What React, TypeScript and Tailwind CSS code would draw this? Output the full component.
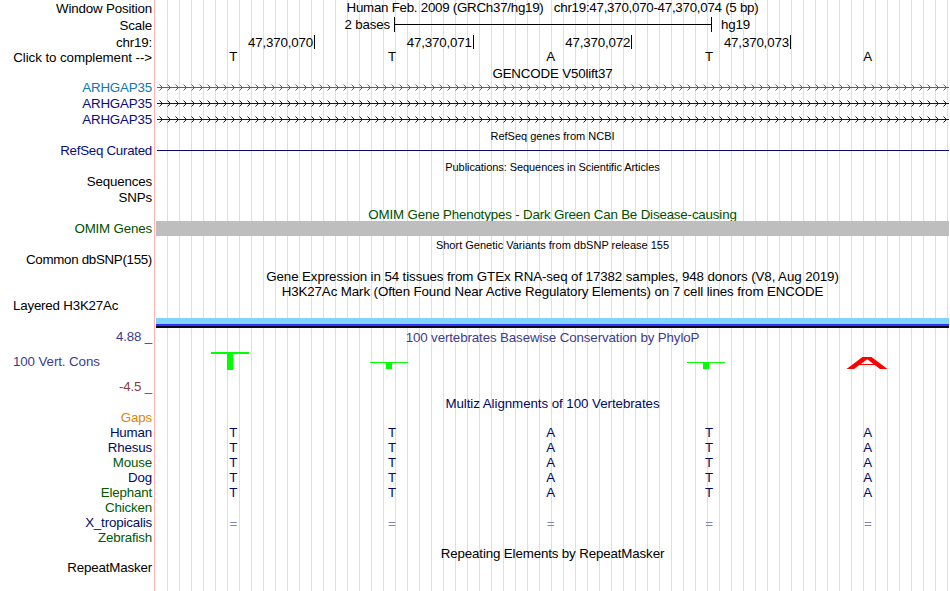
import { clsx } from 'clsx';
import type { ReactNode } from 'react';

const BASES = ['T', 'T', 'A', 'T', 'A'];
const POSITIONS = ['47,370,070', '47,370,071', '47,370,072', '47,370,073'];

const SPECIES = [
  { name: 'Gaps', color: 'text-[#e08600]' },
  { name: 'Human', color: 'text-[#000a64]', bases: BASES },
  { name: 'Rhesus', color: 'text-[#000a64]', bases: BASES },
  { name: 'Mouse', color: 'text-[#005a00]', bases: BASES },
  { name: 'Dog', color: 'text-[#000a64]', bases: BASES },
  { name: 'Elephant', color: 'text-[#005a00]', bases: BASES },
  { name: 'Chicken', color: 'text-[#005a00]' },
  { name: 'X_tropicalis', color: 'text-[#000a64]', bases: ['=', '=', '=', '=', '='], faded: true },
  { name: 'Zebrafish', color: 'text-[#005a00]' },
];

interface RowProps {
  label?: string;
  labelClass?: string;
  className?: string;
  children?: ReactNode;
}

function Row({ label, labelClass, className, children }: RowProps) {
  return (
    <div className={clsx('flex shrink-0', className ?? 'h-4')}>
      <div className={clsx('flex w-[154px] shrink-0 items-center pr-0.5', labelClass ?? 'justify-end')}>{label}</div>
      <div className="ml-0.5 flex min-w-0 flex-1 items-center">{children}</div>
    </div>
  );
}

function Title({ children, className, small }: { children: ReactNode; className?: string; small?: boolean }) {
  return <div className={clsx('w-full pt-0.5 text-center', small && 'text-[11px]', className)}>{children}</div>;
}

function BaseRow({ bases, className }: { bases: string[]; className?: string }) {
  return (
    <div className={clsx('-ml-0.5 grid w-[793px] shrink-0 grid-cols-5 text-center', className)}>
      {bases.map((base, i) => (
        <span key={i}>{base}</span>
      ))}
    </div>
  );
}

// Intron line with strand arrows
function GeneLine({ id, color }: { id: string; color: string }) {
  return (
    <svg width="793" height="16" className="block" shapeRendering="crispEdges">
      <defs>
        <pattern id={id} width="8" height="16" patternUnits="userSpaceOnUse">
          <rect x="6" y="7" width="1" height="1" fill={color} />
          <path d="M5 6h1v1h-1zM5 8h1v1h-1zM4 5h1v1h-1zM4 9h1v1h-1z" fill={color} />
          <path d="M3 4h1v1h-1zM3 10h1v1h-1z" fill={color} opacity="0.5" />
        </pattern>
      </defs>
      <rect x="1" y="7" width="792" height="1" fill={color} />
      <rect x="1" width="792" height="16" fill={`url(#${id})`} />
    </svg>
  );
}

function ConservationLogo() {
  return (
    <svg width="793" height="35" className="block">
      <g fill="#00ff00" shapeRendering="crispEdges">
        <rect x="55" y="7" width="38" height="2" />
        <rect x="71" y="7" width="6" height="18" />
        <rect x="214" y="17" width="38" height="1" />
        <rect x="230" y="17" width="6" height="7" />
        <rect x="531" y="17" width="38" height="1" />
        <rect x="547" y="17" width="6" height="7" />
      </g>
      <path d="M690.5 24L706.5 12H715.5L731.5 24H724L711.2 14.3L698 24ZM701 19H721V20H701Z" fill="#ff0000" />
    </svg>
  );
}

export default function App() {
  return (
    <div className="relative h-[591px] w-[950px] overflow-hidden bg-white font-['Liberation_Sans',Arial,sans-serif] text-[13.33px] leading-none tracking-[-0.17px] whitespace-pre text-black">
      <div className="flex h-full w-[949px] flex-col bg-[linear-gradient(to_right,#ffb4b4,#ffb4b4)] bg-[length:1px_100%] bg-[position:154px_0] bg-no-repeat">
        <div className="absolute top-0 left-[156px] h-full w-[793px] bg-[repeating-linear-gradient(to_right,transparent_0,transparent_11px,#dcdcfa_11px,#dcdcfa_12px)]" />
        <div className="relative flex flex-col">
          <Row label="Window Position" labelClass="justify-end pt-0.5">
            <Title className="pt-0 pb-0.5 tracking-[-0.26px]">
              {'Human Feb. 2009 (GRCh37/hg19)   chr19:47,370,070-47,370,074 (5 bp)'}
            </Title>
          </Row>
          <Row label="Scale" className="h-[17px]" labelClass="justify-end pt-0.5">
            <span className="w-[238px] pr-1 text-right">2 bases</span>
            <div className="flex h-[15px] w-[318px] items-center border-x border-black">
              <div className="h-px w-full bg-black" />
            </div>
            <span className="ml-[9px]">hg19</span>
          </Row>
          <Row label="chr19:" className="h-[17px]" labelClass="justify-end pt-0.5">
            <div className="grid w-full grid-cols-5">
              {POSITIONS.map((pos) => (
                <div
                  key={pos}
                  className="-mr-[0.5px] flex h-[14px] items-center justify-end border-r border-black pt-0.5 pr-px"
                >
                  {pos}
                </div>
              ))}
            </div>
          </Row>
          <Row label="Click to complement -->" className="h-[15px]" labelClass="justify-end tracking-[-0.07px]">
            <BaseRow bases={BASES} className="pb-0.5" />
          </Row>

          <Row className="h-[15px]">
            <Title>GENCODE V50lift37</Title>
          </Row>
          <Row label="ARHGAP35" labelClass="justify-end text-[#0c78b4]">
            <GeneLine id="arrows-a" color="#0c78b4" />
          </Row>
          <Row label="ARHGAP35" labelClass="justify-end text-[#0c0c78]">
            <GeneLine id="arrows-b" color="#0c0c78" />
          </Row>
          <Row label="ARHGAP35" labelClass="justify-end text-[#0c0c78]">
            <GeneLine id="arrows-c" color="#0c0c78" />
          </Row>

          <Row className="h-[15px]">
            <Title small className="tracking-normal">RefSeq genes from NCBI</Title>
          </Row>
          <Row label="RefSeq Curated" labelClass="justify-end tracking-[-0.27px] text-[#0c0c78]">
            <div className="mb-px ml-px h-px w-full bg-[#0c0c78]" />
          </Row>
          <Row className="h-[15px]">
            <Title small className="tracking-[-0.07px]">Publications: Sequences in Scientific Articles</Title>
          </Row>
          <Row label="Sequences" />
          <Row label="SNPs" />

          <Row className="h-[15px]">
            <Title className="text-[#005000]">OMIM Gene Phenotypes - Dark Green Can Be Disease-causing</Title>
          </Row>
          <Row label="OMIM Genes" className="h-[15px]" labelClass="justify-end text-[#005000]">
            <div className="h-full w-full bg-[#bebebe]" />
          </Row>
          <Row className="h-[15px]">
            <Title small className="pt-1 tracking-normal">Short Genetic Variants from dbSNP release 155</Title>
          </Row>
          <Row label="Common dbSNP(155)" labelClass="justify-end pt-0.5 tracking-[-0.3px]" />

          <Row className="h-[17px]">
            <Title className="tracking-[-0.1px]">
              Gene Expression in 54 tissues from GTEx RNA-seq of 17382 samples, 948 donors (V8, Aug 2019)
            </Title>
          </Row>
          <Row className="h-[15px]">
            <Title className="pt-0 pb-0.5 tracking-[-0.11px]">
              H3K27Ac Mark (Often Found Near Active Regulatory Elements) on 7 cell lines from ENCODE
            </Title>
          </Row>
          <Row label="Layered H3K27Ac" className="h-[29px]" labelClass="pb-4 pl-[13px] tracking-[-0.2px]">
            <div className="w-full self-end">
              <div className="h-1.5 bg-[#80d4ff]" />
              <div className="h-0.5 bg-[#3232ff]" />
              <div className="h-0.5 bg-[#0a0a1e]" />
            </div>
          </Row>

          <Row label="4.88 _" className="h-[17px]" labelClass="justify-end text-[#3c3c8c]">
            <Title className="tracking-[-0.12px] text-[#3c3c8c]">100 vertebrates Basewise Conservation by PhyloP</Title>
          </Row>
          <Row label="100 Vert. Cons" className="h-[35px]" labelClass="pb-0.5 pl-[13px] tracking-[-0.1px] text-[#3c3c8c]">
            <ConservationLogo />
          </Row>
          <Row label="-4.5 _" labelClass="justify-end pb-0.5 text-[#8c3c3c]" />

          <Row className="h-[14px]">
            <Title className="pt-0 tracking-[-0.06px] text-[#000a64]">Multiz Alignments of 100 Vertebrates</Title>
          </Row>
          {SPECIES.map(({ name, color, bases, faded }) => (
            <Row key={name} label={name} className="h-[15px]" labelClass={clsx('justify-end', color)}>
              {bases && <BaseRow bases={bases} className={faded ? 'pt-0.5 text-[#8084b2]' : 'text-[#000a64]'} />}
            </Row>
          ))}

          <Row className="h-[15px]">
            <Title className="tracking-[-0.14px]">Repeating Elements by RepeatMasker</Title>
          </Row>
          <Row label="RepeatMasker" className="h-[15px]" />
        </div>
      </div>
    </div>
  );
}
